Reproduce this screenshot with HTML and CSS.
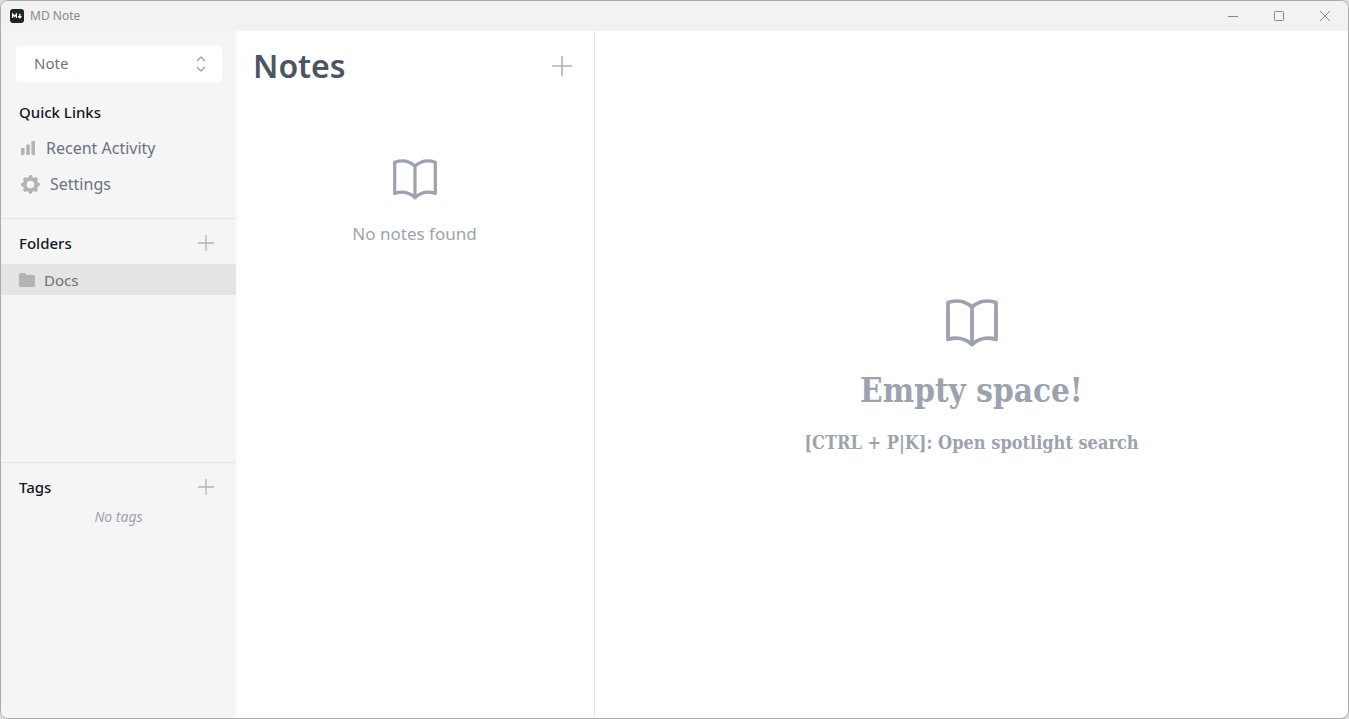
FILE: index.html
```html
<!DOCTYPE html>
<html lang="en">
<head>
<meta charset="utf-8">
<meta name="viewport" content="width=device-width, initial-scale=1">
<title>MD Note</title>
<link rel="stylesheet" href="styles.css">
</head>
<body>
<svg class="defs" aria-hidden="true">
  <symbol id="plus" viewBox="0 0 16 16"><path d="M8 .5v15M.5 8h15" fill="none" stroke="currentColor" stroke-linecap="round" stroke-width="1.3"/></symbol>
  <symbol id="book" viewBox="0 0 52 48"><path d="M26 8C20 2.5 11 .5 2 3.5v37c9-3 18-.5 24 5 6-5.5 15-8 24-5v-37C41 .5 32 2.5 26 8v37" fill="none" stroke="currentColor" stroke-width="3.8" stroke-linejoin="round" stroke-linecap="round"/></symbol>
</svg>
<div class="window">
  <header class="titlebar">
    <svg class="logo" viewBox="0 0 14 14" aria-hidden="true"><rect width="14" height="14" rx="3" fill="#1c2725"/><path d="M2.6 9V5.2l1.9 2 1.9-2V9M9.8 4.8v4M8.2 7.3l1.6 1.6 1.6-1.6" fill="none" stroke="#fff" stroke-width="1.3"/></svg>
    <span class="app-name">MD Note</span>
    <div class="controls">
      <button aria-label="Minimize"><svg viewBox="0 0 10 10"><path d="M0 5.5h10"/></svg></button>
      <button aria-label="Maximize"><svg viewBox="0 0 10 10"><rect x=".5" y=".5" width="9" height="9" rx="1"/></svg></button>
      <button aria-label="Close"><svg viewBox="0 0 10 10"><path d="M0 0l10 10M10 0L0 10"/></svg></button>
    </div>
  </header>
  <div class="body">
    <aside class="sidebar">
      <section class="quick">
        <div class="picker">
          <select aria-label="Workspace"><option>Note</option></select>
          <svg class="chevrons" viewBox="0 0 10 16" aria-hidden="true"><path d="M1 5l4-4 4 4M1 11l4 4 4-4"/></svg>
        </div>
        <h2>Quick Links</h2>
        <nav>
          <a class="link" href="#recent"><svg class="bars" viewBox="0 0 14 14" aria-hidden="true"><rect y="7" width="3.6" height="7" rx="1.2"/><rect x="5.2" y="3.5" width="3.6" height="10.5" rx="1.2"/><rect x="10.4" width="3.6" height="14" rx="1.2"/></svg>Recent Activity</a>
          <a class="link settings" href="#settings"><svg class="gear" viewBox="2 2 16 16" aria-hidden="true"><path fill-rule="evenodd" d="M11.49 3.17c-.38-1.56-2.6-1.56-2.98 0a1.532 1.532 0 01-2.286.948c-1.372-.836-2.942.734-2.106 2.106.54.886.061 2.042-.947 2.287-1.561.379-1.561 2.6 0 2.978a1.532 1.532 0 01.947 2.287c-.836 1.372.734 2.942 2.106 2.106a1.532 1.532 0 012.287.947c.379 1.561 2.6 1.561 2.978 0a1.533 1.533 0 012.287-.947c1.372.836 2.942-.734 2.106-2.106a1.533 1.533 0 01.947-2.287c1.561-.379 1.561-2.6 0-2.978a1.532 1.532 0 01-.947-2.287c.836-1.372-.734-2.942-2.106-2.106a1.532 1.532 0 01-2.287-.947zM10 13.2a3.2 3.2 0 100-6.4 3.2 3.2 0 000 6.4z"/></svg>Settings</a>
        </nav>
      </section>
      <section class="group">
        <div class="group-head"><h2>Folders</h2><button class="add" aria-label="Add folder"><svg><use href="#plus"/></svg></button></div>
        <a class="folder" href="#docs"><svg viewBox="0 0 16 14" aria-hidden="true"><path d="M1.6 0h4.2l2 2h6.6A1.6 1.6 0 0116 3.6v8.8a1.6 1.6 0 01-1.6 1.6H1.6A1.6 1.6 0 010 12.4V1.6A1.6 1.6 0 011.6 0z"/></svg>Docs</a>
      </section>
      <section class="group">
        <div class="group-head"><h2>Tags</h2><button class="add" aria-label="Add tag"><svg><use href="#plus"/></svg></button></div>
        <p class="no-tags">No tags</p>
      </section>
    </aside>
    <section class="notes">
      <div class="notes-head"><h1>Notes</h1><button class="add large" aria-label="Add note"><svg><use href="#plus"/></svg></button></div>
      <div class="notes-empty"><svg aria-hidden="true"><use href="#book"/></svg><p>No notes found</p></div>
    </section>
    <main class="editor">
      <svg aria-hidden="true"><use href="#book"/></svg>
      <h2>Empty space!</h2>
      <p>[CTRL + P|K]: Open spotlight search</p>
    </main>
  </div>
</div>
</body>
</html>
```
FILE: styles.css
```css
* { box-sizing: border-box; }
body { margin: 0; background: #dcdcdc; font: 15px/24px "Noto Sans", sans-serif; color: #6b7280; }
h1, h2, p { margin: 0; }
button { border: 0; padding: 0; background: none; color: inherit; cursor: pointer; }
a { color: inherit; text-decoration: none; }
svg { display: block; flex: none; }
.defs { position: absolute; width: 0; height: 0; }

.window { display: flex; flex-direction: column; height: 100vh; border: 1px solid #ababab; border-radius: 8px; overflow: hidden; background: #fff; }
.titlebar { display: flex; align-items: center; height: 30px; padding-left: 9px; gap: 6px; background: #f2f2f2; color: #8a8a8a; font-size: 12px; line-height: 16px; flex: none; }
.logo { width: 14px; height: 14px; }
.controls { display: flex; margin-left: auto; }
.controls button { display: flex; align-items: center; justify-content: center; width: 46px; height: 28px; }
.controls svg { width: 10px; height: 10px; fill: none; stroke: #858585; overflow: visible; }

.body { display: grid; grid-template-columns: 236px 358px minmax(0, 1fr); flex: 1; min-height: 0; }

.sidebar { display: grid; grid-template-rows: auto 244fr 256fr; background: #f5f5f5; border-right: 1px solid #fafafa; }
.sidebar h2 { font-size: 15px; line-height: 24px; font-weight: 500; color: #111827; }
.quick { padding: 15px 14px 16px 15px; }
.picker { display: grid; align-items: center; margin-bottom: 18px; }
.picker select, .chevrons { grid-area: 1 / 1; }
.picker select { appearance: none; width: 100%; height: 36px; border: 0; border-radius: 4px; padding: 0 18px 2px; background: #fff; color: #6b7280; font: inherit; }
.chevrons { justify-self: end; width: 10px; height: 16px; margin-right: 16px; fill: none; stroke: #9ca3af; stroke-width: 1.4; pointer-events: none; }
.quick h2 { padding-left: 3px; }
.quick nav { padding: 6px 0 0 5px; }
.link { display: flex; align-items: center; gap: 11px; height: 36px; font-size: 16px; }
.settings { gap: 10px; }
.bars { width: 14px; height: 14px; fill: #b3b3b3; }
.gear { width: 19px; height: 19px; fill: #b3b3b3; }

.group { border-top: 1px solid #e5e5e5; }
.group-head { display: flex; align-items: center; justify-content: space-between; height: 45px; padding: 3px 22px 0 18px; }
.add { color: #b3b3b3; }
.add svg { width: 16px; height: 16px; }
.add.large svg { width: 20px; height: 20px; }
.folder { display: flex; align-items: center; gap: 9px; height: 31px; padding-left: 18px; background: #e5e4e2; }
.folder svg { width: 16px; height: 14px; fill: #b3b3b3; }
.no-tags { font-size: 14px; line-height: 18px; font-style: italic; text-align: center; color: #9ca3af; }

.notes { border-right: 1px solid #e5e5e5; }
.notes-head { display: flex; align-items: center; justify-content: space-between; height: 70px; padding: 0 22px 0 16px; }
.notes-head h1 { font-size: 32px; line-height: 40px; font-weight: 600; color: #4b5563; }
.notes-empty { display: flex; flex-direction: column; align-items: center; gap: 20px; padding: 58px 2px 0 0; color: #9ca3af; }
.notes-empty svg { width: 44px; height: 41px; }
.notes-empty p { font-size: 17px; line-height: 28px; }

.editor { display: flex; flex-direction: column; align-items: center; justify-content: center; padding-top: 6px; color: #9ca3af; font-family: "DejaVu Serif Condensed", "DejaVu Serif", serif; font-weight: 700; }
.editor svg { width: 52px; height: 48px; }
.editor h2 { font-size: 33px; line-height: 40px; margin: 24px 0 18px; }
.editor p { font-size: 18px; line-height: 28px; }
```
